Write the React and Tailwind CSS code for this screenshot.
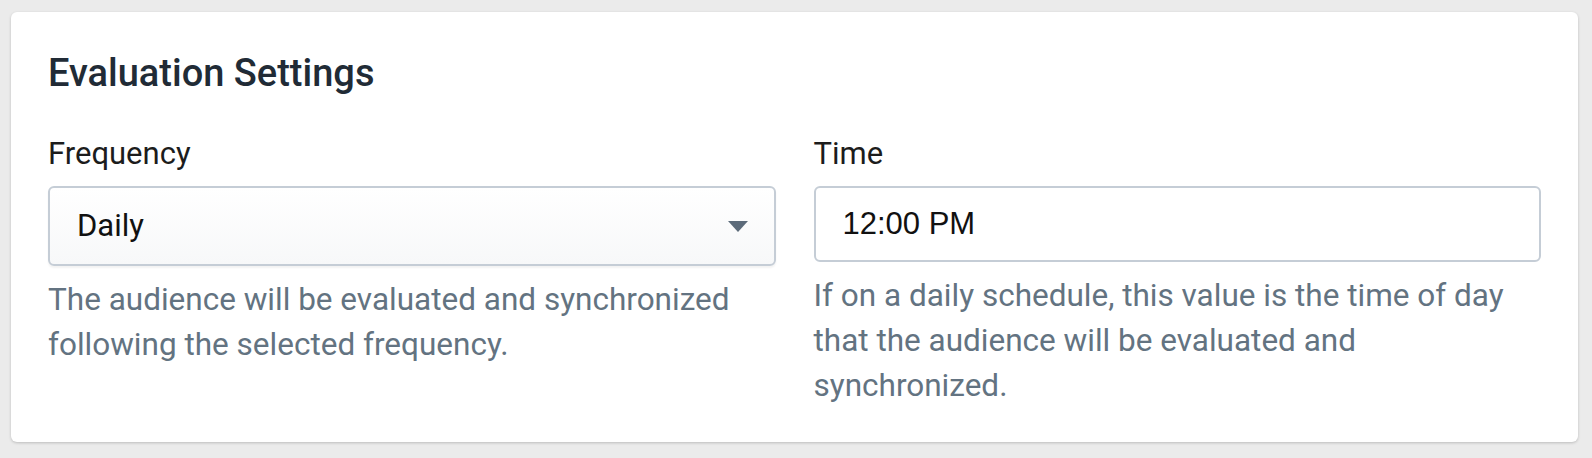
export default function App() {
  return (
    <main
      className="min-h-[458px] bg-[#ebebeb] pt-[12px] pb-[20px] pl-[11px] pr-[14px]"
      style={{ fontFamily: 'Roboto, "Liberation Sans", sans-serif' }}
    >
      <section className="rounded-[6px] bg-white px-[37px] pt-[39px] pb-[34px] shadow-[0_1px_3px_rgba(0,0,0,0.2)]">
        <h2 className="text-[38px] leading-[44px] font-medium text-[#212b36]">
          Evaluation Settings
        </h2>

        <div className="mt-[36px] grid grid-cols-2 gap-[38px]">
          <div>
            <label className="block text-[31px] leading-[45px] text-[#1c1c1c]">Frequency</label>
            <div className="mt-[10px] flex h-[80px] items-center justify-between rounded-[6px] border-2 border-[#c5cdd6] bg-gradient-to-b from-white to-[#f7f8f9] pl-[27px] pr-[26px] shadow-[0_2px_2px_rgba(0,0,0,0.05)]">
              <span className="text-[31px] text-[#111]">Daily</span>
              <svg width="20" height="11" viewBox="0 0 20 11" aria-hidden="true">
                <path d="M0 0h20L10 11z" fill="#5c6b7a" />
              </svg>
            </div>
            <p className="mt-[11px] text-[31.5px] leading-[45px] text-[#637381]">
              The audience will be evaluated and synchronized following the selected frequency.
            </p>
          </div>

          <div>
            <label className="block text-[31px] leading-[45px] text-[#1c1c1c]">Time</label>
            <div className="mt-[10px] flex h-[76px] items-center rounded-[6px] border-2 border-[#c5cdd6] bg-white pl-[27px]">
              <span
                className="text-[31px] text-[#111]"
                style={{ fontFamily: '"Liberation Sans", Arial, sans-serif' }}
              >
                12:00 PM
              </span>
            </div>
            <p className="mt-[11px] text-[31.5px] leading-[45px] text-[#637381]">
              If on a daily schedule, this value is the time of day that the audience will be evaluated and synchronized.
            </p>
          </div>
        </div>
      </section>
    </main>
  );
}
